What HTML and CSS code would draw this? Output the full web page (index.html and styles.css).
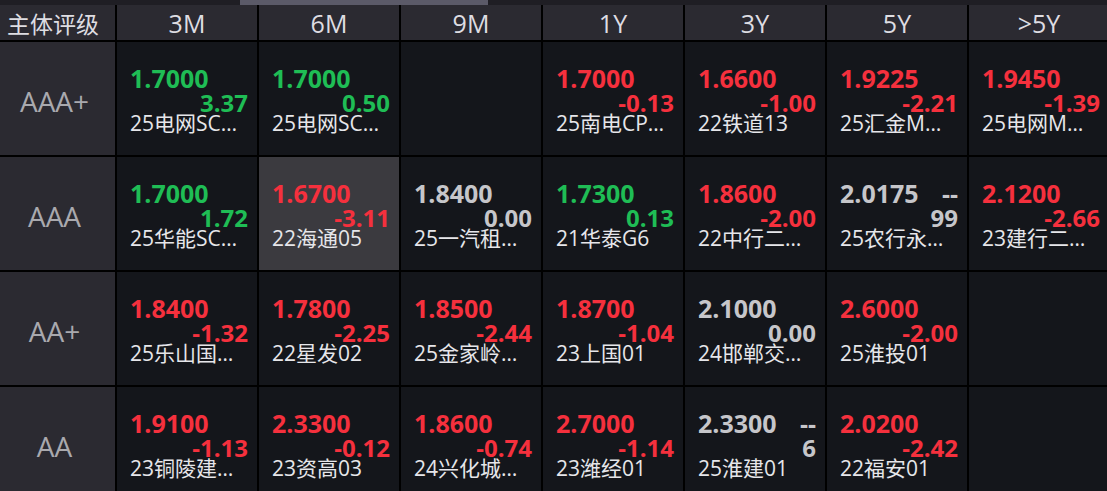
FILE: index.html
```html
<!DOCTYPE html>
<html lang="zh-CN">
<head>
    <meta charset="UTF-8">
    <title>信用债收益率矩阵</title>
    <link rel="stylesheet" href="styles.css">
</head>
<body>
    <div class="scroll-track"><div class="scroll-thumb"></div></div>

    <div class="board">
        <!-- 表头 -->
        <div class="head head-first">主体评级</div>
        <div class="head">3M</div>
        <div class="head">6M</div>
        <div class="head">9M</div>
        <div class="head">1Y</div>
        <div class="head">3Y</div>
        <div class="head">5Y</div>
        <div class="head">&gt;5Y</div>

        <!-- AAA+ -->
        <div class="rating">AAA+</div>
        <div class="cell up"><div class="val">1.7000</div><div class="chg">3.37</div><div class="name">25电网SC…</div></div>
        <div class="cell up"><div class="val">1.7000</div><div class="chg">0.50</div><div class="name">25电网SC…</div></div>
        <div class="cell"></div>
        <div class="cell down"><div class="val">1.7000</div><div class="chg">-0.13</div><div class="name">25南电CP…</div></div>
        <div class="cell down"><div class="val">1.6600</div><div class="chg">-1.00</div><div class="name">22铁道13</div></div>
        <div class="cell down"><div class="val">1.9225</div><div class="chg">-2.21</div><div class="name">25汇金M…</div></div>
        <div class="cell down"><div class="val">1.9450</div><div class="chg">-1.39</div><div class="name">25电网M…</div></div>

        <!-- AAA -->
        <div class="rating">AAA</div>
        <div class="cell up"><div class="val">1.7000</div><div class="chg">1.72</div><div class="name">25华能SC…</div></div>
        <div class="cell down active"><div class="val">1.6700</div><div class="chg">-3.11</div><div class="name">22海通05</div></div>
        <div class="cell flat"><div class="val">1.8400</div><div class="chg">0.00</div><div class="name">25一汽租…</div></div>
        <div class="cell up"><div class="val">1.7300</div><div class="chg">0.13</div><div class="name">21华泰G6</div></div>
        <div class="cell down"><div class="val">1.8600</div><div class="chg">-2.00</div><div class="name">22中行二…</div></div>
        <div class="cell flat"><div class="val split"><span>2.0175</span><span class="dash">--</span></div><div class="chg">99</div><div class="name">25农行永…</div></div>
        <div class="cell down"><div class="val">2.1200</div><div class="chg">-2.66</div><div class="name">23建行二…</div></div>

        <!-- AA+ -->
        <div class="rating">AA+</div>
        <div class="cell down"><div class="val">1.8400</div><div class="chg">-1.32</div><div class="name">25乐山国…</div></div>
        <div class="cell down"><div class="val">1.7800</div><div class="chg">-2.25</div><div class="name">22星发02</div></div>
        <div class="cell down"><div class="val">1.8500</div><div class="chg">-2.44</div><div class="name">25金家岭…</div></div>
        <div class="cell down"><div class="val">1.8700</div><div class="chg">-1.04</div><div class="name">23上国01</div></div>
        <div class="cell flat"><div class="val">2.1000</div><div class="chg">0.00</div><div class="name">24邯郸交…</div></div>
        <div class="cell down"><div class="val">2.6000</div><div class="chg">-2.00</div><div class="name">25淮投01</div></div>
        <div class="cell"></div>

        <!-- AA -->
        <div class="rating">AA</div>
        <div class="cell down"><div class="val">1.9100</div><div class="chg">-1.13</div><div class="name">23铜陵建…</div></div>
        <div class="cell down"><div class="val">2.3300</div><div class="chg">-0.12</div><div class="name">23资高03</div></div>
        <div class="cell down"><div class="val">1.8600</div><div class="chg">-0.74</div><div class="name">24兴化城…</div></div>
        <div class="cell down"><div class="val">2.7000</div><div class="chg">-1.14</div><div class="name">23潍经01</div></div>
        <div class="cell flat"><div class="val split"><span>2.3300</span><span class="dash">--</span></div><div class="chg">6</div><div class="name">25淮建01</div></div>
        <div class="cell down"><div class="val">2.0200</div><div class="chg">-2.42</div><div class="name">22福安01</div></div>
        <div class="cell"></div>
    </div>
</body>
</html>
```

FILE: styles.css
```css
:root {
    --bg-strip: #1f1e24;
    --bg-head: #2b2a31;
    --bg-cell: #14161b;
    --bg-active: #3b3a3f;
    --line: #000;
    --text-head: #dedde2;
    --text-rating: #a9a9ae;
    --text-name: #e6e6ea;
    --up: #1fbd55;
    --down: #f5303d;
    --flat: #c6c6ca;
}

body {
    margin: 0;
    width: 1107px;
    height: 491px;
    overflow: hidden;
    background-color: var(--bg-cell);
    font-family: "Open Sans", "Noto Sans CJK SC", sans-serif;
}
.scroll-track {
    height: 5px;
    background-color: var(--bg-strip);
    position: relative;
}
.scroll-thumb {
    position: absolute;
    left: 240px;
    top: 0;
    width: 248px;
    height: 5px;
    background-color: #5b5a68;
}
.board {
    display: grid;
    grid-template-columns: 115px repeat(7, 140px);
    grid-template-rows: 35px repeat(4, 113px);
    gap: 2px;
    width: 1109px;
    background-color: var(--line);
}
.head {
    background-color: var(--bg-head);
    color: var(--text-head);
    font-size: 25px;
    display: flex;
    align-items: center;
    justify-content: center;
    padding-top: 1px;
}
.head-first {
    font-size: 23px;
    justify-content: flex-start;
    padding-left: 7px;
}
.rating {
    background-color: var(--bg-head);
    color: var(--text-rating);
    font-size: 28px;
    display: flex;
    align-items: center;
    justify-content: center;
    padding-right: 6px;
    padding-top: 4px;
}
.cell {
    background-color: var(--bg-cell);
    display: flex;
    flex-direction: column;
    justify-content: center;
    padding: 2px 9px 0 13px;
    min-width: 0;
}
.cell.active {
    background-color: var(--bg-active);
}
.val {
    font-size: 25px;
    font-weight: bold;
    line-height: 26px;
}
.val.split {
    display: flex;
    justify-content: space-between;
}
.chg {
    font-size: 24px;
    font-weight: bold;
    line-height: 24px;
    text-align: right;
}
.name {
    font-size: 21px;
    line-height: 26px;
    margin: -5px 0 -1px;
    color: var(--text-name);
    white-space: nowrap;
    overflow: hidden;
}
.up .val, .up .chg {
    color: var(--up);
}
.down .val, .down .chg {
    color: var(--down);
}
.flat .val, .flat .chg {
    color: var(--flat);
}
```
